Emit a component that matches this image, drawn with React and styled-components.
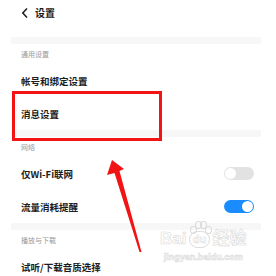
import React from "react";
import styled, { createGlobalStyle } from "styled-components";

const Global = createGlobalStyle`
  html, body { margin: 0; padding: 0; background: #fff; }
  body { font-family: "Noto Sans CJK SC", "Noto Sans", sans-serif; }
  #root { width: 276px; height: 276px; overflow: hidden; }
`;

const Page = styled.div`
  position: relative;
  width: 276px;
  height: 276px;
  overflow: hidden;
  background: #fff;
`;

const Screen = styled.div`
  margin-left: 11px;
  width: 250px;
  display: flex;
  flex-direction: column;
`;

const Header = styled.div`
  height: 37px;
  display: flex;
  align-items: flex-start;
  padding: 7px 0 0 10px;
  box-sizing: border-box;
  gap: 6px;
`;

const Back = styled.svg`
  width: 8px;
  height: 12px;
  flex: none;
`;

const Title = styled.div`
  font-size: 10px;
  line-height: 12px;
  font-weight: 700;
  color: #1a1a1a;
`;

const Band = styled.div`
  height: 7px;
  background: #f7f7f7;
`;

const SectionLabel = styled.div`
  height: 20px;
  display: flex;
  align-items: center;
  padding-left: 10px;
  font-size: 7px;
  color: #999;
`;

const Row = styled.div`
  height: 33px;
  display: flex;
  align-items: center;
  justify-content: space-between;
  padding: 0 7px 0 10px;
`;

const RowText = styled.div`
  font-size: 9.5px;
  font-weight: 700;
  color: #1c1c1c;
  white-space: nowrap;
`;

const Toggle = styled.div`
  width: 30px;
  height: 13px;
  border-radius: 7px;
  background: ${(p) => (p.$on ? "#1a8cff" : "#e2e2e2")};
  display: flex;
  align-items: center;
  justify-content: ${(p) => (p.$on ? "flex-end" : "flex-start")};
  padding: 0 1px;
  box-sizing: border-box;
`;

const Knob = styled.div`
  width: 11px;
  height: 11px;
  border-radius: 50%;
  background: #fff;
`;

const Highlight = styled.div`
  position: absolute;
  left: 12px;
  top: 91px;
  width: 150px;
  height: 50px;
  box-sizing: border-box;
  border: 3px solid #f21414;
  pointer-events: none;
`;

const Overlay = styled.svg`
  position: absolute;
  left: 0;
  top: 0;
  width: 276px;
  height: 276px;
  pointer-events: none;
`;

const Watermark = styled.div`
  position: absolute;
  left: 160px;
  top: 220px;
  display: flex;
  flex-direction: column;
  align-items: center;
  color: #fff;
  -webkit-text-stroke: 0.6px #dadada;
  font-family: "Liberation Sans", "Noto Sans CJK SC", sans-serif;
  pointer-events: none;
`;

const WmTop = styled.div`
  display: flex;
  align-items: flex-end;
  gap: 2px;
  font-size: 17px;
  font-weight: 700;
  line-height: 18px;
`;

const WmUrl = styled.div`
  font-size: 9px;
  line-height: 11px;
  margin-top: 4px;
  font-weight: 700;
`;

const Paw = styled.div`
  position: relative;
  width: 22px;
  height: 28px;
  display: flex;
  align-items: flex-end;
  justify-content: center;
`;

const PawText = styled.span`
  font-size: 11px;
  line-height: 15px;
  border: 1px solid #dadada;
  border-radius: 9px;
  padding: 0 3px;
  -webkit-text-stroke: 0.5px #dadada;
`;

const Toe = styled.span`
  position: absolute;
  width: 5px;
  height: 6px;
  border: 1px solid #dadada;
  border-radius: 50%;
`;

export default function App() {
  return (
    <Page>
      <Global />
      <Screen>
        <Header>
          <Back viewBox="0 0 8 12">
            <polyline points="6,1.5 1.8,6 6,10.5" fill="none" stroke="#222" strokeWidth="1.6" />
          </Back>
          <Title>设置</Title>
        </Header>
        <Band />
        <SectionLabel>通用设置</SectionLabel>
        <Row><RowText>帐号和绑定设置</RowText></Row>
        <Row><RowText>消息设置</RowText></Row>
        <Band />
        <SectionLabel>网络</SectionLabel>
        <Row>
          <RowText>仅Wi-Fi联网</RowText>
          <Toggle><Knob /></Toggle>
        </Row>
        <Row>
          <RowText>流量消耗提醒</RowText>
          <Toggle $on><Knob /></Toggle>
        </Row>
        <Band />
        <SectionLabel>播放与下载</SectionLabel>
        <Row><RowText>试听/下载音质选择</RowText></Row>
      </Screen>
      <Watermark>
        <WmTop>
          <span>Bai</span>
          <Paw>
            <Toe style={{ left: 2, top: 6 }} />
            <Toe style={{ left: 7, top: 1 }} />
            <Toe style={{ left: 12, top: 1 }} />
            <Toe style={{ left: 17, top: 6 }} />
            <PawText>du</PawText>
          </Paw>
          <span>经验</span>
        </WmTop>
        <WmUrl>jingyan.baidu.com</WmUrl>
      </Watermark>
      <Highlight />
      <Overlay viewBox="0 0 276 276">
        <polygon
          points="112,160 124,169 119.5,171 141.5,252 139.5,252 114.5,173 107,175"
          fill="#f21414"
        />
      </Overlay>
    </Page>
  );
}
